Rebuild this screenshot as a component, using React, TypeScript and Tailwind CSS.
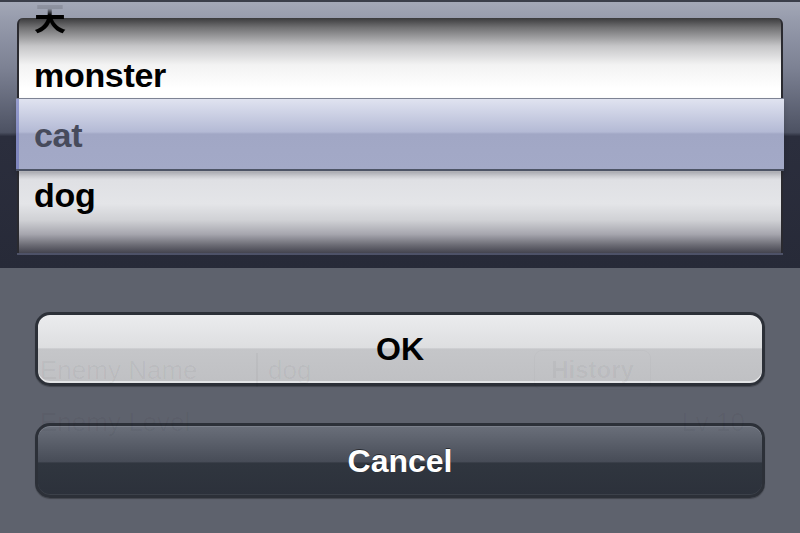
import React from "react";

const font = { fontFamily: '"Liberation Sans", Arial, "Noto Sans CJK SC", sans-serif' };

export default function App() {
  return (
    <div
      className="relative w-[800px] h-[533px] overflow-hidden bg-[#5e626d]"
      style={font}
    >
      {/* Picker frame */}
      <div className="h-[268px] border-t-2 border-[#3a3e4a] bg-[linear-gradient(to_bottom,#a3a8b7_0%,#9499aa_8%,#7c8193_25%,#4d5263_49%,#2b2e3d_50.5%,#272a38_100%)] px-[17px] pt-[16px]">
        <div className="relative flex h-[235px] flex-col rounded-t-[6px] border-x-2 border-[#2a2a30] bg-[linear-gradient(to_bottom,#3a3a3c_0%,#707072_4%,#c6c6c8_12%,#f3f3f3_20%,#ffffff_30%,#ffffff_64%,#c2c3ca_65.5%,#dfe0e4_69%,#e4e5e8_79%,#d0d1d5_86%,#a6a6ae_92%,#6d6d76_96.5%,#44444f_100%)] shadow-[0_2px_0_#4e5268]">
          <div className="-mt-[33px] flex flex-col text-[34px] font-bold tracking-[-0.3px] text-black">
            <div className="flex h-[60px] items-center pl-[15px]">
              <span
                className="mt-[2px] bg-[linear-gradient(to_bottom,rgba(0,0,0,0.06)_0%,rgba(0,0,0,0.12)_35%,#000_48%,#000_100%)] bg-clip-text text-[32px] font-bold text-transparent"
                style={{ fontFamily: '"Noto Sans CJK SC", sans-serif' }}
              >
                天
              </span>
            </div>
            <div className="flex h-[60px] items-center pl-[15px]">monster</div>
            <div className="relative z-10 flex h-[60px] items-center pl-[15px] text-[#474b5c]">cat</div>
            <div className="flex h-[60px] items-center pl-[15px]">dog</div>
          </div>
          {/* Selection bar */}
          <div className="absolute -left-[3px] -right-[3px] top-[80px] h-[73px] border-t border-b-2 border-t-[#7e8394] border-b-[#4d5466] bg-[linear-gradient(to_bottom,#e0e3f0_0%,#d2d6e8_15%,#b4bad5_47%,#a1a7c5_50%,#a3a9c7_100%)] shadow-[inset_3px_0_0_rgba(104,112,184,0.6),0_3px_5px_rgba(0,0,0,0.15)]" />
        </div>
      </div>

      {/* Buttons */}
      <div className="flex flex-col gap-[37px] px-[35px] pt-[44px]">
        <div className="flex h-[74px] items-center justify-center rounded-[15px] border-[3px] border-[#2c3038] bg-[linear-gradient(to_bottom,#ebecee_0%,#dddee0_48%,#c5c6c9_50%,#bfc0c3_100%)] text-[32px] font-bold text-black shadow-[inset_0_-2px_0_#e4e5e7,0_1px_1px_rgba(0,0,0,0.3)]">
          OK
        </div>
        <div className="flex h-[75px] items-center justify-center rounded-[15px] border-[3px] border-[#2c3038] bg-[linear-gradient(to_bottom,#6a6f7a_0%,#565b66_30%,#474c57_52%,#30363f_53.5%,#2c313b_100%)] text-[32px] font-bold text-white shadow-[inset_0_1px_0_#7b808b,inset_0_-1px_0_#3c414a,0_1px_1px_rgba(0,0,0,0.3)] [text-shadow:0_-1px_0_rgba(0,0,0,0.5)]">
          Cancel
        </div>
      </div>

      {/* Faint underlying form showing through */}
      <div className="pointer-events-none absolute inset-0 flex flex-col pt-[350px] text-black/[0.035]">
        <div className="flex h-[40px] items-center pl-[40px] text-[26px]">
          <span className="w-[216px]">Enemy Name</span>
          <span className="h-[34px] w-[2px] bg-black/[0.03]" />
          <span className="w-[276px] pl-[10px]">dog</span>
          <span className="flex h-[40px] w-[117px] items-center justify-center rounded-[8px] border border-black/[0.02] font-bold text-[24px]">
            History
          </span>
        </div>
        <div className="mt-[15px] flex h-[35px] items-center justify-between pl-[40px] pr-[55px] text-[26px]">
          <span>Enemy Level</span>
          <span>Lv 10</span>
        </div>
        <div className="mt-[93px] flex h-[40px] pl-[287px]">
          <div className="w-[171px] rounded-tl-[14px] bg-white/[0.03]" />
          <div className="w-[172px] rounded-tr-[14px] bg-[#3a4466]/[0.12]" />
        </div>
      </div>
    </div>
  );
}
